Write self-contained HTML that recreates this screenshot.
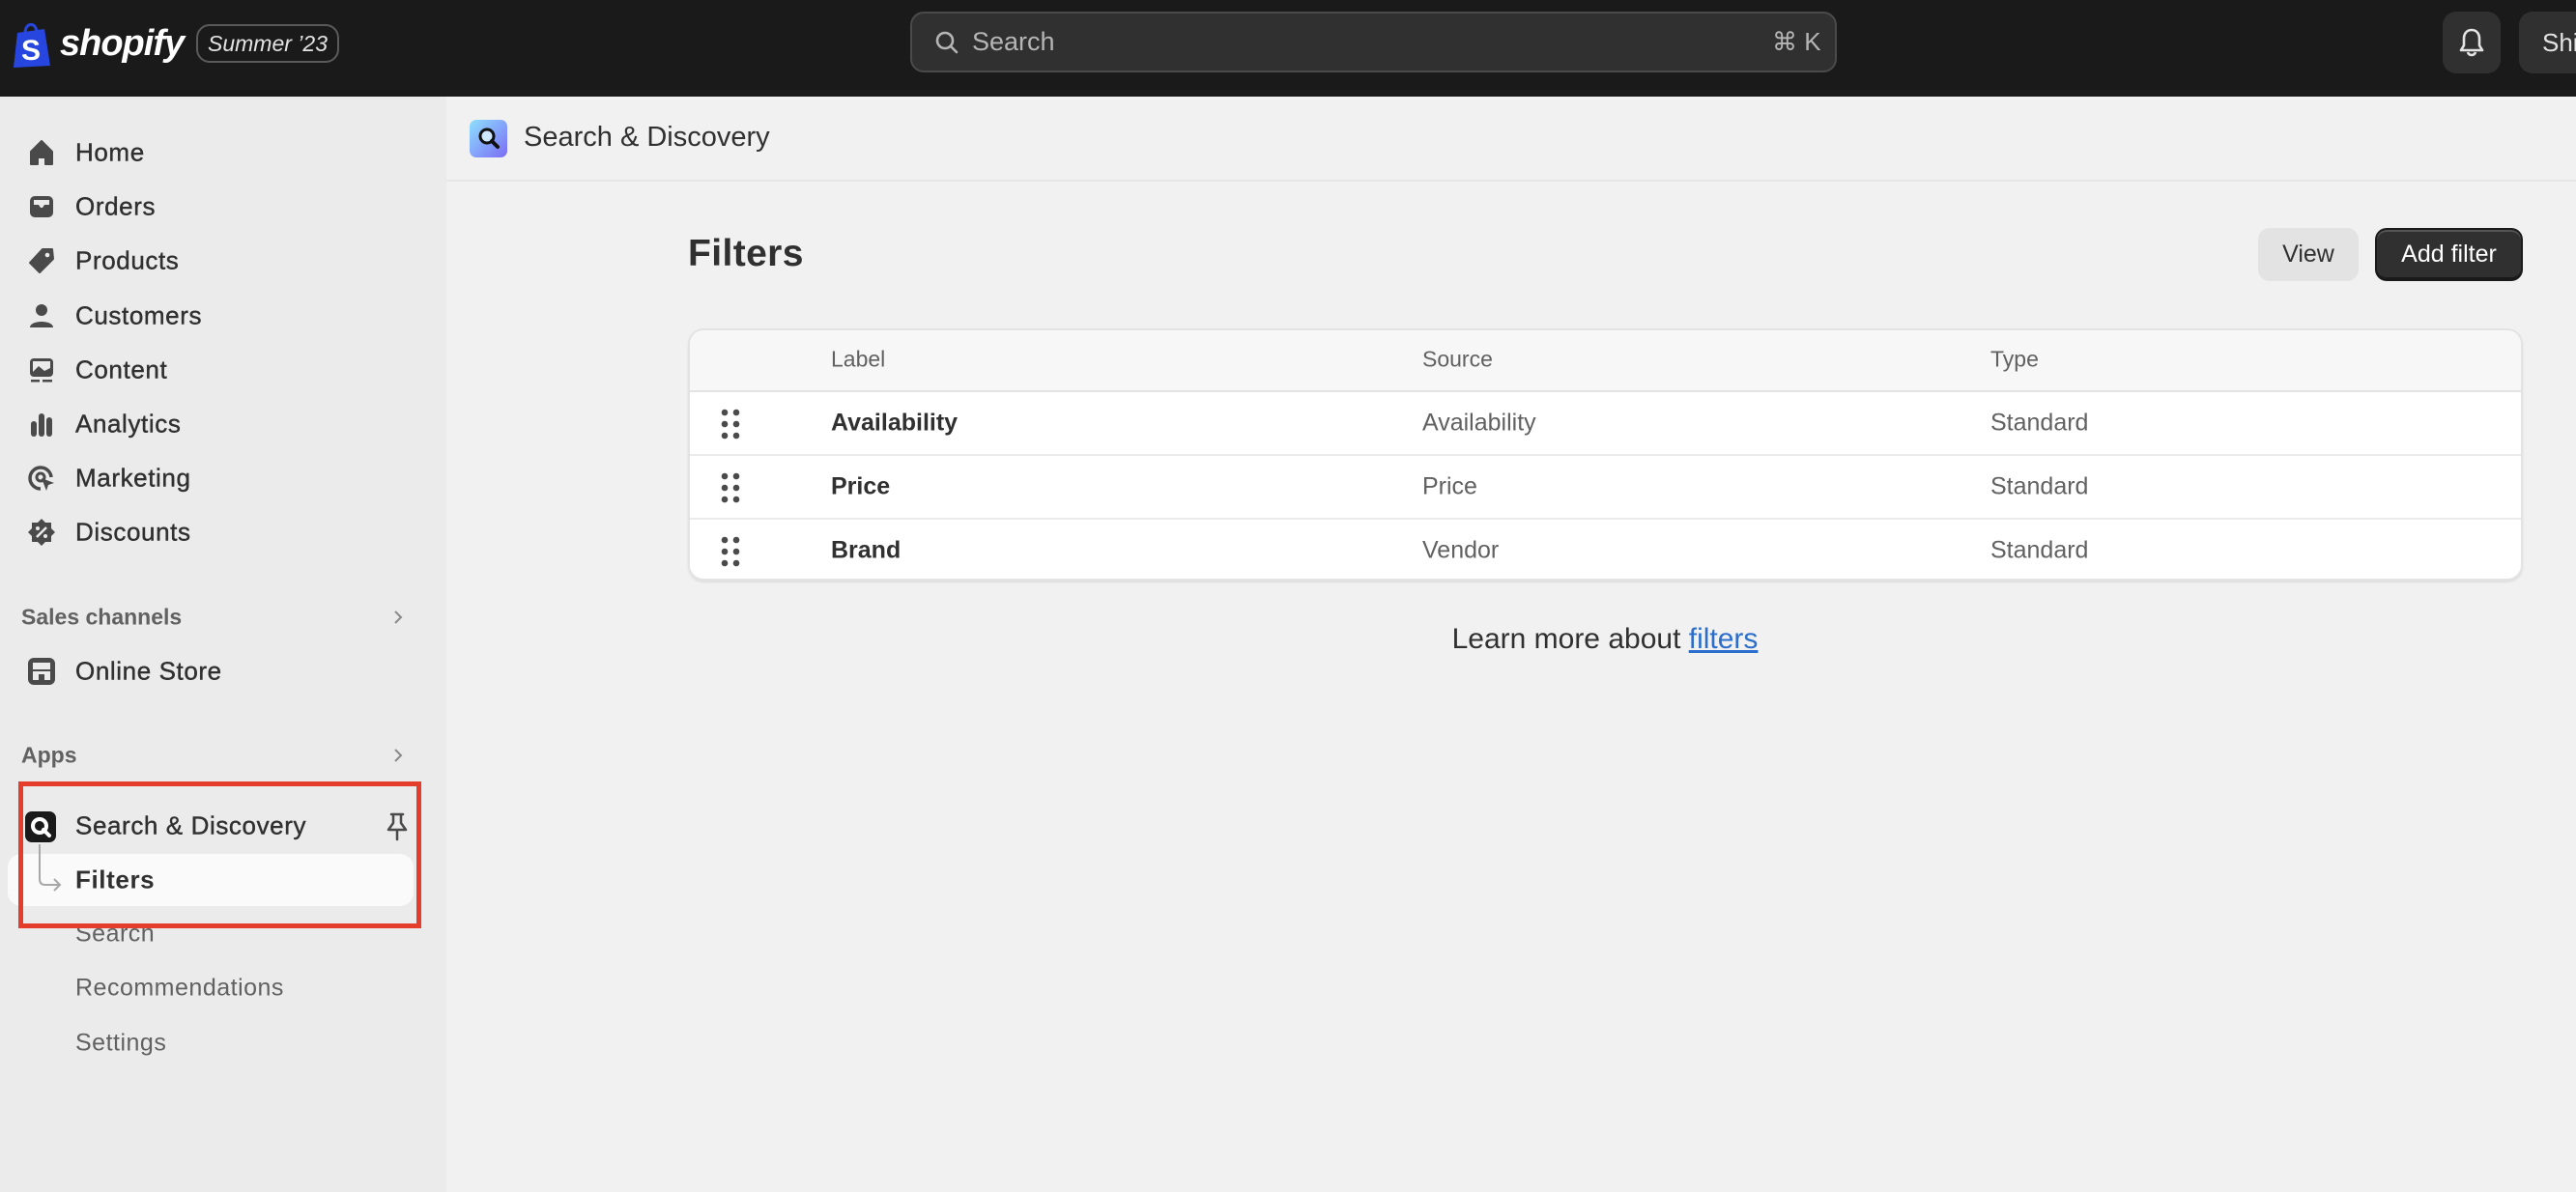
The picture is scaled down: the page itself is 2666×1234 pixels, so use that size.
<!DOCTYPE html>
<html><head><meta charset="utf-8"><style>
*{margin:0;padding:0;box-sizing:border-box}
body{width:2666px;height:1234px;overflow:hidden;background:#f1f1f1;font-family:"Liberation Sans",sans-serif;color:#303030;position:relative}
.a{position:absolute;white-space:nowrap}
.top{left:0;top:0;width:2666px;height:100px;background:#1a1a1a}
.side{left:0;top:100px;width:462px;height:1134px;background:#ebebeb}
.nav{left:78px;font-size:26px;color:#303030;-webkit-text-stroke:.4px #303030;transform:translateY(-50%);letter-spacing:.6px}
.ic{left:28px;width:30px;height:30px;transform:translateY(-50%)}
.sec{left:22px;font-size:23px;color:#616161;font-weight:bold;transform:translateY(-50%)}
.sub{left:78px;font-size:25px;color:#616161;transform:translateY(-50%);letter-spacing:.5px}
.chev{left:402px;transform:translateY(-50%)}
.cell{font-size:25px;color:#616161;transform:translateY(-50%)}
.lab{font-size:25px;color:#303030;font-weight:bold;transform:translateY(-50%)}
</style></head><body>
<div class="a top"></div>
<svg class="a" style="left:12px;top:20px" width="46" height="52" viewBox="0 0 46 52"><path d="M6 14 L34 10 L40 48 L2 50 Z" fill="#2746e0"/><path d="M14 14 C14 4 24 2 26 12" stroke="#2746e0" stroke-width="3" fill="none"/><text x="10" y="42" font-size="30" font-weight="bold" fill="#fff" font-family="Liberation Sans">S</text></svg>
<div class="a" style="left:62px;top:24px;font-size:38px;font-weight:bold;font-style:italic;color:#fff;letter-spacing:-1px">shopify</div>
<div class="a" style="left:203px;top:25px;width:148px;height:40px;border:2px solid #5a5a5a;border-radius:14px;color:#e3e3e3;font-size:23px;font-style:italic;text-align:center;line-height:36px">Summer ’23</div>
<div class="a" style="left:942px;top:12px;width:959px;height:63px;background:#303030;border:2px solid #4a4a4a;border-radius:14px"></div>
<svg class="a" style="left:966px;top:30px" width="28" height="28" viewBox="0 0 28 28"><circle cx="12" cy="12" r="8" stroke="#b5b5b5" stroke-width="2.6" fill="none"/><path d="M18 18 L24 24" stroke="#b5b5b5" stroke-width="2.6" stroke-linecap="round"/></svg>
<div class="a" style="left:1006px;top:28px;font-size:27px;color:#b5b5b5">Search</div>
<div class="a" style="left:1834px;top:28px;font-size:26px;color:#b5b5b5">⌘ K</div>
<div class="a" style="left:2528px;top:12px;width:60px;height:64px;background:#303030;border-radius:14px"></div>
<svg class="a" style="left:2544px;top:28px" width="28" height="32" viewBox="0 0 28 32"><path d="M14 3 C8 3 6 8 6 12 L6 19 L3 24 L25 24 L22 19 L22 12 C22 8 20 3 14 3Z M10 26 C11 30 17 30 18 26" stroke="#e3e3e3" stroke-width="2.6" fill="none" stroke-linejoin="round"/></svg>
<div class="a" style="left:2607px;top:12px;width:80px;height:64px;background:#303030;border-radius:14px;color:#e3e3e3;font-size:26px;line-height:64px;padding-left:24px">Shi</div>

<div class="a side"></div>
<svg class="a ic" style="top:158px" viewBox="0 0 30 30"><path d="M4 14 L15 3 L26 14 L26 27 L19 27 L19 20 L11 20 L11 27 L4 27Z" fill="#4a4a4a" stroke="#4a4a4a" stroke-width="2" stroke-linejoin="round"/></svg>
<svg class="a ic" style="top:214px" viewBox="0 0 30 30"><rect x="3" y="4" width="24" height="22" rx="5" fill="#4a4a4a"/><path d="M7 8 L23 8 L23 13 L18 13 L16 16 L14 16 L12 13 L7 13Z" fill="#ebebeb"/></svg>
<svg class="a ic" style="top:270px" viewBox="0 0 30 30"><path d="M16 3 L26 3 L27 13 L13 27 L3 17 Z" fill="#4a4a4a" stroke="#4a4a4a" stroke-width="2" stroke-linejoin="round"/><circle cx="21" cy="9" r="2.3" fill="#ebebeb"/></svg>
<svg class="a ic" style="top:327px" viewBox="0 0 30 30"><circle cx="15" cy="9" r="6" fill="#4a4a4a"/><path d="M3 27 C3 19 27 19 27 27Z" fill="#4a4a4a"/></svg>
<svg class="a ic" style="top:383px" viewBox="0 0 30 30"><rect x="3" y="3" width="24" height="19" rx="4" fill="#4a4a4a"/><rect x="6" y="6" width="18" height="11" fill="#ebebeb"/><path d="M6 17 L12 11 L18 16 L24 13 L24 17Z" fill="#4a4a4a"/><rect x="4" y="25" width="9" height="2.5" fill="#4a4a4a"/><rect x="16" y="25" width="10" height="2.5" fill="#4a4a4a"/></svg>
<svg class="a ic" style="top:439px" viewBox="0 0 30 30"><rect x="4" y="12" width="6" height="16" rx="3" fill="#4a4a4a"/><rect x="12" y="4" width="6" height="24" rx="3" fill="#4a4a4a"/><rect x="20" y="8" width="6" height="20" rx="3" fill="#4a4a4a"/></svg>
<svg class="a ic" style="top:495px" viewBox="0 0 30 30"><path d="M14 26 A11 11 0 1 1 25 14" stroke="#4a4a4a" stroke-width="3.5" fill="none"/><circle cx="14" cy="14" r="4" stroke="#4a4a4a" stroke-width="3" fill="none"/><path d="M15 15 L28 20 L22 22 L20 28 Z" fill="#4a4a4a"/></svg>
<svg class="a ic" style="top:551px" viewBox="0 0 30 30"><path d="M15 1 L19 5 L25 5 L25 11 L29 15 L25 19 L25 25 L19 25 L15 29 L11 25 L5 25 L5 19 L1 15 L5 11 L5 5 L11 5Z" fill="#4a4a4a"/><path d="M10 20 L20 10" stroke="#ebebeb" stroke-width="2.5"/><circle cx="11" cy="11" r="2" fill="#ebebeb"/><circle cx="19" cy="19" r="2" fill="#ebebeb"/></svg>
<svg class="a ic" style="top:695px" viewBox="0 0 30 30"><rect x="1" y="1" width="28" height="28" rx="6" fill="#4a4a4a"/><rect x="6" y="6" width="18" height="7" fill="#ebebeb"/><rect x="6" y="15" width="18" height="9" fill="#ebebeb"/><rect x="12" y="18" width="6" height="6" fill="#4a4a4a"/></svg>
<div class="a nav" style="top:158px">Home</div>
<div class="a nav" style="top:214px">Orders</div>
<div class="a nav" style="top:270px">Products</div>
<div class="a nav" style="top:327px">Customers</div>
<div class="a nav" style="top:383px">Content</div>
<div class="a nav" style="top:439px">Analytics</div>
<div class="a nav" style="top:495px">Marketing</div>
<div class="a nav" style="top:551px">Discounts</div>
<div class="a sec" style="top:639px">Sales channels</div>
<svg class="a chev" style="top:639px" width="20" height="20" viewBox="0 0 20 20"><path d="M7 4 L13 10 L7 16" stroke="#8a8a8a" stroke-width="2" fill="none"/></svg>
<div class="a nav" style="top:695px">Online Store</div>
<div class="a sec" style="top:782px">Apps</div>
<svg class="a chev" style="top:782px" width="20" height="20" viewBox="0 0 20 20"><path d="M7 4 L13 10 L7 16" stroke="#8a8a8a" stroke-width="2" fill="none"/></svg>
<div class="a" style="left:8px;top:884px;width:420px;height:54px;background:#fafafa;border-radius:14px"></div>
<svg class="a" style="left:26px;top:840px" width="32" height="32" viewBox="0 0 32 32"><rect width="32" height="32" rx="7" fill="#1a1a1a"/><circle cx="15" cy="15" r="7" stroke="#fff" stroke-width="4" fill="none"/><path d="M19 19 L25 25" stroke="#fff" stroke-width="4" stroke-linecap="round"/></svg>
<svg class="a" style="left:38px;top:874px" width="30" height="70" viewBox="0 0 30 70"><path d="M3 0 L3 36 Q3 42 9 42 L24 42 M18 36 L24 42 L18 48" stroke="#a8a8a8" stroke-width="2" fill="none"/></svg>
<div class="a nav" style="top:855px">Search &amp; Discovery</div>
<svg class="a" style="left:397px;top:840px" width="28" height="32" viewBox="0 0 28 32"><path d="M8 3 L20 3 M10 3 L10 12 L5 19 L23 19 L18 12 L18 3 M14 19 L14 29" stroke="#4a4a4a" stroke-width="2.5" fill="none" stroke-linejoin="round" stroke-linecap="round"/></svg>
<div class="a nav" style="top:911px;font-weight:bold;-webkit-text-stroke:0">Filters</div>
<div class="a sub" style="top:967px">Search</div>
<div class="a sub" style="top:1023px">Recommendations</div>
<div class="a sub" style="top:1080px">Settings</div>
<div class="a" style="left:19px;top:809px;width:417px;height:152px;border:5px solid #e43d2b"></div>

<div class="a" style="left:462px;top:186px;width:2204px;height:2px;background:#e6e6e6"></div>
<div class="a" style="left:486px;top:124px;width:39px;height:39px;border-radius:7px;background:linear-gradient(135deg,#8ee0ff,#7b6cf5)"></div>
<svg class="a" style="left:489px;top:127px" width="33" height="33" viewBox="0 0 33 33"><circle cx="15" cy="14" r="7" stroke="#111" stroke-width="3" fill="#cfe8ff"/><path d="M20 19 L26 25" stroke="#111" stroke-width="4" stroke-linecap="round"/></svg>
<div class="a" style="left:542px;top:126px;font-size:29px;color:#303030">Search &amp; Discovery</div>

<div class="a" style="left:712px;top:241px;font-size:39px;font-weight:bold;color:#303030;letter-spacing:.4px">Filters</div>
<div class="a" style="left:2337px;top:236px;width:104px;height:55px;background:#e3e3e3;border-radius:12px;text-align:center;line-height:55px;font-size:25px;color:#303030">View</div>
<div class="a" style="left:2458px;top:236px;width:153px;height:55px;background:#303030;border:2px solid #1a1a1a;border-bottom-width:4px;border-radius:12px;text-align:center;line-height:50px;font-size:25px;color:#fff;box-shadow:inset 0 2px 0 #555">Add filter</div>

<div class="a" style="left:712px;top:340px;width:1899px;height:261px;background:#fff;border:2px solid #e3e3e3;border-radius:16px;overflow:hidden;box-shadow:0 2px 2px rgba(0,0,0,.08)">
 <div style="height:64px;background:#f7f7f7;border-bottom:2px solid #e3e3e3"></div>
 <div style="height:66px;border-bottom:2px solid #ebebeb"></div>
 <div style="height:66px;border-bottom:2px solid #ebebeb"></div>
</div>
<div class="a cell" style="left:860px;top:372px;font-size:23px">Label</div>
<div class="a cell" style="left:1472px;top:372px;font-size:23px">Source</div>
<div class="a cell" style="left:2060px;top:372px;font-size:23px">Type</div>

<div class="a lab" style="left:860px;top:438px">Availability</div>
<div class="a cell" style="left:1472px;top:438px">Availability</div>
<div class="a cell" style="left:2060px;top:438px">Standard</div>
<div class="a lab" style="left:860px;top:504px">Price</div>
<div class="a cell" style="left:1472px;top:504px">Price</div>
<div class="a cell" style="left:2060px;top:504px">Standard</div>
<div class="a lab" style="left:860px;top:570px">Brand</div>
<div class="a cell" style="left:1472px;top:570px">Vendor</div>
<div class="a cell" style="left:2060px;top:570px">Standard</div>

<svg class="a" style="left:745px;top:423px" width="22" height="32" viewBox="0 0 22 32"><g fill="#4a4a4a"><circle cx="5" cy="4" r="3.3"/><circle cx="17" cy="4" r="3.3"/><circle cx="5" cy="16" r="3.3"/><circle cx="17" cy="16" r="3.3"/><circle cx="5" cy="28" r="3.3"/><circle cx="17" cy="28" r="3.3"/></g></svg>
<svg class="a" style="left:745px;top:489px" width="22" height="32" viewBox="0 0 22 32"><g fill="#4a4a4a"><circle cx="5" cy="4" r="3.3"/><circle cx="17" cy="4" r="3.3"/><circle cx="5" cy="16" r="3.3"/><circle cx="17" cy="16" r="3.3"/><circle cx="5" cy="28" r="3.3"/><circle cx="17" cy="28" r="3.3"/></g></svg>
<svg class="a" style="left:745px;top:555px" width="22" height="32" viewBox="0 0 22 32"><g fill="#4a4a4a"><circle cx="5" cy="4" r="3.3"/><circle cx="17" cy="4" r="3.3"/><circle cx="5" cy="16" r="3.3"/><circle cx="17" cy="16" r="3.3"/><circle cx="5" cy="28" r="3.3"/><circle cx="17" cy="28" r="3.3"/></g></svg>

<div class="a" style="left:1661px;top:662px;transform:translate(-50%,-50%);font-size:30px;color:#303030">Learn more about <span style="color:#2c6ecb;text-decoration:underline">filters</span></div>
</body></html>
